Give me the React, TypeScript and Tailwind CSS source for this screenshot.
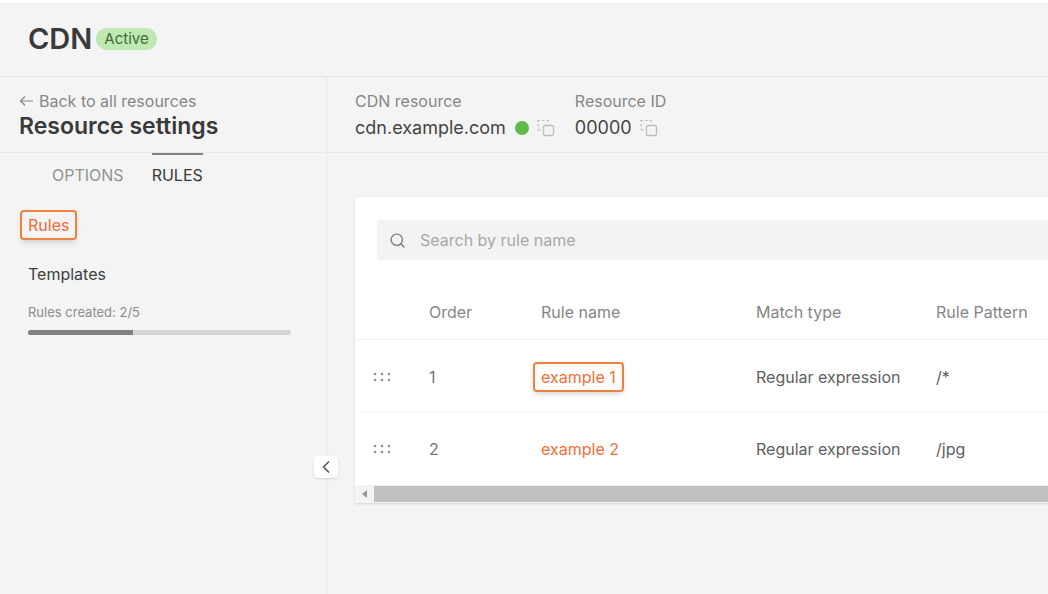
import React, { memo, useState } from "react";
import { ChevronLeft, Search } from "lucide-react";

interface Rule {
	order: number;
	name: string;
	matchType: string;
	pattern: string;
	highlighted?: boolean;
}

const RULES: Rule[] = [
	{
		order: 1,
		name: "example 1",
		matchType: "Regular expression",
		pattern: "/*",
		highlighted: true,
	},
	{
		order: 2,
		name: "example 2",
		matchType: "Regular expression",
		pattern: "/jpg",
	},
];

const RULES_LIMIT = 5;

const BackIcon = () => (
	<svg
		width="14"
		height="12"
		viewBox="0 0 14 12"
		fill="none"
		stroke="currentColor"
		strokeWidth="1.2"
	>
		<path d="M14 6H1.5M6 1.5L1.5 6L6 10.5" />
	</svg>
);

const CopyIcon = () => (
	<svg width="18" height="18" viewBox="0 0 18 18" fill="none" stroke="#bdbdbd">
		<rect x="6.5" y="6.5" width="10" height="10" rx="1.5" strokeWidth="1.3" />
		<path
			d="M1 3V1.5h2M5 1.5h2.5M9.5 1.5h1.5V3M1.3 5v2.5M1.3 9.5V11H4"
			strokeWidth="1.2"
		/>
	</svg>
);

const DragIcon = () => (
	<svg width="18" height="10" viewBox="0 0 18 10" fill="#929292">
		{[2, 9, 16].map((x) => (
			<React.Fragment key={x}>
				<circle cx={x} cy="2" r="1.3" />
				<circle cx={x} cy="8" r="1.3" />
			</React.Fragment>
		))}
	</svg>
);

interface ResourceFieldProps {
	label: string;
	value: string;
	online?: boolean;
}

const ResourceField = memo<ResourceFieldProps>(({ label, value, online }) => (
	<div>
		<p className="text-base leading-6 text-[#868686]">{label}</p>
		<div className="flex items-center text-lg leading-[30px] text-[#454545]">
			<span>{value}</span>
			{online && (
				<span className="ml-[9px] h-3.5 w-3.5 rounded-full bg-[#5dbb46]" />
			)}
			<button type="button" aria-label={`Copy ${label}`} className="ml-2">
				<CopyIcon />
			</button>
		</div>
	</div>
));

ResourceField.displayName = "ResourceField";

const Sidebar = () => (
	<aside className="relative w-[328px] shrink-0 border-r-2 border-[#eeeeee]">
		<div className="h-[76px] border-b border-[#e9e9e9] pl-[19px] pt-3">
			<a
				href="#resources"
				className="flex items-center gap-1.5 text-base leading-6 text-[#868686]"
			>
				<BackIcon />
				Back to all resources
			</a>
			<h2 className="text-[23px] font-semibold leading-[26px] text-[#3a3a3a]">
				Resource settings
			</h2>
		</div>
		<nav className="flex gap-7 pl-[52px] text-base leading-6">
			<a
				href="#options"
				className="border-t-2 border-transparent pt-2 text-[#929292]"
			>
				OPTIONS
			</a>
			<a
				href="#rules"
				className="border-t-2 border-[#808080] pt-2 text-[#3a3a3a]"
			>
				RULES
			</a>
		</nav>
		<div className="flex flex-col items-start px-5 pt-[23px] text-base">
			<a
				href="#rules"
				className="rounded border-2 border-[#f0803c] px-1.5 leading-[26px] text-[#f26a35] shadow-md"
			>
				Rules
			</a>
			<a href="#templates" className="mt-5 px-2 leading-7 text-[#3f3f3f]">
				Templates
			</a>
			<p className="mt-3 px-2 text-[13px] leading-6 text-[#8c8c8c]">
				Rules created: {RULES.length}/{RULES_LIMIT}
			</p>
			<div className="mt-1.5 w-full pl-2 pr-[15px]">
				<div className="h-[5px] overflow-hidden rounded-full bg-[#d5d5d5]">
					<div
						className="h-full bg-[#808280]"
						style={{ width: `${(RULES.length / RULES_LIMIT) * 100}%` }}
					/>
				</div>
			</div>
		</div>
		<button
			type="button"
			aria-label="Collapse sidebar"
			className="absolute -right-3 top-[379px] flex h-[22px] w-6 items-center justify-center rounded bg-white text-[#555555] shadow-sm"
		>
			<ChevronLeft size={20} />
		</button>
	</aside>
);

const RulesTable = memo<{ rules: Rule[] }>(({ rules }) => (
	<table className="w-full table-fixed text-left text-base">
		<colgroup>
			<col className="w-[74px]" />
			<col className="w-28" />
			<col className="w-[215px]" />
			<col className="w-[180px]" />
			<col />
		</colgroup>
		<thead>
			<tr className="h-[55px] border-b border-[#f0f0f0] text-[#868686]">
				<th />
				<th className="pt-0.5 font-normal">Order</th>
				<th className="pt-0.5 font-normal">Rule name</th>
				<th className="pt-0.5 font-normal">Match type</th>
				<th className="pt-0.5 font-normal">Rule Pattern</th>
			</tr>
		</thead>
		<tbody>
			{rules.map((rule) => (
				<tr
					key={rule.order}
					className="h-[72px] border-b border-[#f7f7f7] text-[#606060] last:border-b-0"
				>
					<td className="pl-[18px] pt-1">
						<DragIcon />
					</td>
					<td className="pt-1 text-[#757575]">{rule.order}</td>
					<td className="pt-1">
						<a
							href={`#rule-${rule.order}`}
							className={
								rule.highlighted
									? "-ml-2 inline-block rounded border-2 border-[#f0803c] px-1.5 leading-[26px] text-[#f07038] shadow-md"
									: "text-[#f07038]"
							}
						>
							{rule.name}
						</a>
					</td>
					<td className="pt-1">{rule.matchType}</td>
					<td className="pt-1">{rule.pattern}</td>
				</tr>
			))}
		</tbody>
	</table>
));

RulesTable.displayName = "RulesTable";

const App = () => {
	const [search, setSearch] = useState("");

	const rules = RULES.filter((rule) => rule.name.includes(search));

	return (
		<div className="flex min-h-screen flex-col border-t-3 border-white bg-[#f4f4f4] font-['Inter',sans-serif]">
			<header className="flex h-[74px] items-center gap-1 border-b border-[#e2e2e2] pb-0.5 pl-7">
				<h1 className="text-[29px] font-semibold text-[#3a3a3a]">CDN</h1>
				<span className="rounded-full bg-[#bfe8b3] px-2 text-[15px] leading-[22px] text-[#3f6b3a]">
					Active
				</span>
			</header>
			<div className="flex flex-1">
				<Sidebar />
				<main className="min-w-0 flex-1">
					<div className="flex h-[76px] gap-5 border-b border-[#e9e9e9] pl-[27px] pt-3">
						<ResourceField
							label="CDN resource"
							value="cdn.example.com"
							online
						/>
						<ResourceField label="Resource ID" value="00000" />
					</div>
					<div className="pl-[27px] pt-11">
						<section className="rounded-tl bg-white shadow-sm">
							<div className="pb-6 pl-[22px] pt-[23px]">
								<label className="flex h-10 items-center gap-3.5 bg-[#f3f3f3] pl-3 text-[#808080]">
									<Search size={17} strokeWidth={2} />
									<input
										type="text"
										aria-label="Search by rule name"
										value={search}
										onChange={(e) => setSearch(e.target.value)}
										placeholder="Search by rule name"
										className="flex-1 bg-transparent text-base outline-none placeholder:text-[#a8a8a8]"
									/>
								</label>
							</div>
							<RulesTable rules={rules} />
							<div className="mt-0.5 flex h-[18px] items-center bg-[#f3f3f3]">
								<button
									type="button"
									aria-label="Scroll left"
									className="flex w-[19px] justify-center"
								>
									<svg width="5" height="8" viewBox="0 0 5 8" fill="#999999">
										<path d="M5 0v8L0 4z" />
									</svg>
								</button>
								<div className="h-4 flex-1 bg-[#c1c1c1]" />
							</div>
						</section>
					</div>
				</main>
			</div>
		</div>
	);
};

export default App;
